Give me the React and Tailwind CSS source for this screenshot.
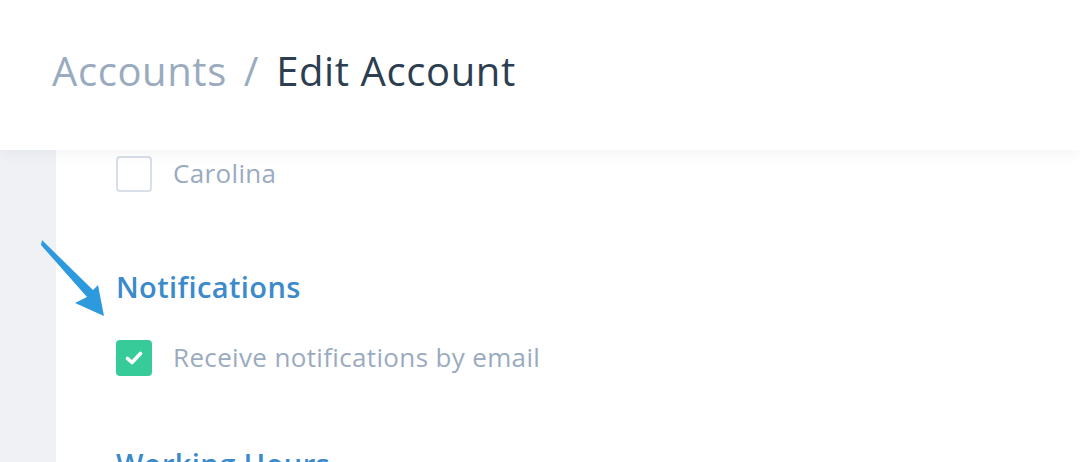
import React from 'react';

const font = { fontFamily: '"Open Sans", Lato, sans-serif' };

const Arrow = () => (
  <svg className="absolute left-0 top-0 pointer-events-none" width="120" height="330" viewBox="0 0 120 330">
    <path d="M42 240 L46 244 L93 290 L98 285 L104 316 L75 303 L87 297 L41 245 Z" fill="#2d9ade" />
  </svg>
);

const App = () => {
  return (
    <div className="relative w-[1080px] h-[462px] overflow-hidden bg-[#eff1f5]" style={font}>
      <header className="relative z-10 h-[150px] bg-white shadow-[0_2px_14px_rgba(40,60,90,0.07)] flex items-center pl-[52px] pb-[8px]">
        <div className="flex items-baseline text-[40px] tracking-[0.6px]">
          <span className="text-[#9aabbf]">Accounts</span>
          <span className="text-[#9aabbf] mx-[17px]">/</span>
          <span className="text-[#2c3e50]">Edit Account</span>
        </div>
      </header>
      <main className="ml-[56px] h-[312px] bg-white pl-[60px]">
        <div className="flex items-center gap-[21px] pt-[4px]">
          <span className="w-[36px] h-[36px] rounded-[4px] border-2 border-[#d8dfe8] bg-white" />
          <span className="text-[26px] tracking-[0.35px] text-[#9aabbf]">Carolina</span>
        </div>
        <h3 className="mt-[76px] text-[29px] tracking-[0.4px] font-semibold text-[#3b8acb] leading-[36px]">Notifications</h3>
        <div className="flex items-center gap-[21px] mt-[33px]">
          <span className="w-[36px] h-[36px] rounded-[4px] bg-[#38cb9a] flex items-center justify-center">
            <svg width="20" height="20" viewBox="0 0 20 20">
              <path d="M3.5 10.5 L8 14.5 L16.5 5.5" fill="none" stroke="white" strokeWidth="3.6" strokeLinecap="round" strokeLinejoin="round" />
            </svg>
          </span>
          <span className="text-[26px] tracking-[0.35px] text-[#9aabbf]">Receive notifications by email</span>
        </div>
        <h3 className="mt-[69px] text-[29px] tracking-[0.4px] font-semibold text-[#3b8acb] leading-[36px]">Working Hours</h3>
      </main>
      <Arrow />
    </div>
  );
};

export default App;
